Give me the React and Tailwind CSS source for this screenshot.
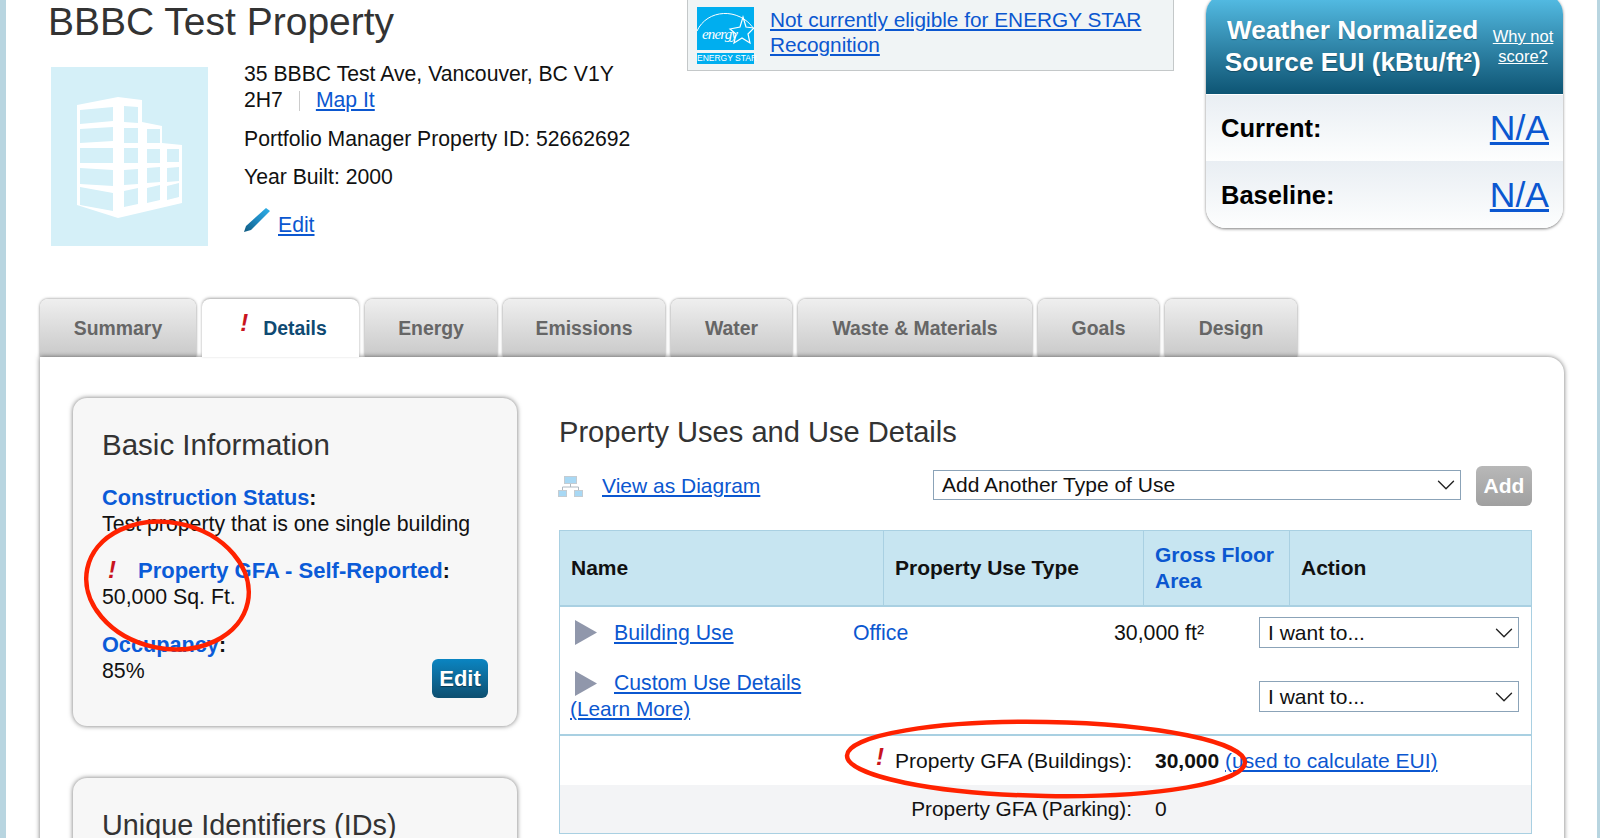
import React from 'react';
import { ChevronDown } from 'lucide-react';

const tabs = [
  { name: 'Summary', width: 'w-[156px]' },
  { name: 'Details', width: 'w-[157px]', active: true },
  { name: 'Energy', width: 'w-[132px]' },
  { name: 'Emissions', width: 'w-[162px]' },
  { name: 'Water', width: 'w-[121px]' },
  { name: 'Waste & Materials', width: 'w-[234px]' },
  { name: 'Goals', width: 'w-[121px]' },
  { name: 'Design', width: 'w-[132px]' },
];

const windows = [
  { x1: 29, x2: 62, rows: [[43, 57, 3], [62, 76, 2], [81, 96, 0], [101, 117, -2], [120, 138, -6]] },
  { x1: 73, x2: 87, rows: [[39, 55, -1], [61, 76, 0], [81, 96, 0], [103, 118, 1], [124, 140, 3]] },
  { x1: 96, x2: 109, rows: [[62, 76, 0], [82, 96, 0], [101, 116, 1], [121, 136, 3]] },
  { x1: 116, x2: 128, rows: [[82, 95, 0], [101, 115, 1], [119, 133, 3]] },
];

function BuildingImage() {
  return (
    <svg viewBox="0 0 157 179" className="w-[157px] h-[179px] shrink-0 bg-[#d5f0f8]">
      <polygon fill="#fff" points="26,38 67,30 91,33 91,55 111,59 111,76 131,78 131,136 67,151 26,138" />
      {windows.map(col => col.rows.map(([y1, y2, d]) => (
        <polygon
          key={col.x1 + '-' + y1}
          fill="#d5f0f8"
          points={`${col.x1},${y1} ${col.x2},${y1 - d} ${col.x2},${y2 - d} ${col.x1},${y2}`}
        />
      )))}
    </svg>
  );
}

function EnergyStarLogo() {
  return (
    <div className="w-[57px] h-[57px] shrink-0 flex flex-col gap-[3px]">
      <svg viewBox="0 0 57 43" className="w-[57px] h-[43px] bg-[#00aeef] shrink-0">
        <path d="M0 24 C10 2 42 0 57 22" fill="none" stroke="#fff" strokeWidth="1" />
        <polygon fill="none" stroke="#fff" strokeWidth="1.2" points="46,10 49,20 57,21 51,27 53,36 45,31 37,36 39,27 33,22 43,20" />
        <text x="5" y="32" fill="#fff" fontSize="15" fontStyle="italic" fontFamily="Liberation Serif, serif" textLength="36">energy</text>
      </svg>
      <div className="h-[11px] bg-[#00aeef] text-white text-[8.5px] leading-[11px] text-center whitespace-nowrap">ENERGY STAR</div>
    </div>
  );
}

function Triangle() {
  return (
    <svg viewBox="0 0 22 25" className="w-[22px] h-[25px] shrink-0">
      <polygon points="0,0 22,12.5 0,25" fill="#9097ab" />
    </svg>
  );
}

function Bang({ className }) {
  return <span className={'font-bold italic text-[#c9141e] ' + className}>!</span>;
}

function Select({ label, className }) {
  return (
    <div className={'relative ' + className}>
      <select className="w-full h-full appearance-none bg-white border border-[#8ba3b8] pl-2 text-[21px] text-[#111] rounded-none">
        <option>{label}</option>
      </select>
      <ChevronDown className="absolute right-0 top-1/2 -translate-y-1/2 w-[30px] h-[30px] text-[#222] pointer-events-none" strokeWidth={1.1} />
    </div>
  );
}

function Card({ title, titleSize, children, className }) {
  return (
    <div className={'bg-[#f7f7f7] rounded-[14px] shadow-[0_0_5px_rgba(0,0,0,0.55)] pl-[29px] pr-[29px] pt-[29px] ' + className}>
      <h3 className={titleSize + ' leading-[36px] text-[#333]'}>{title}</h3>
      {children}
    </div>
  );
}

export default function App() {
  return (
    <div className="relative h-[838px] overflow-hidden bg-[#b8d5e0] pl-[6px] pr-[3px] font-['Liberation_Sans',Arial,sans-serif] text-[21px] leading-[26px] text-[#111]">
      <div className="bg-white h-full">

        {/* top of page */}
        <div className="flex h-[299px]">
          <div className="w-[678px] pl-[42px] shrink-0">
            <h1 className="text-[39px] leading-[44px] text-[#333]">BBBC Test Property</h1>
            <div className="flex gap-[36px] mt-[23px] ml-[3px]">
              <BuildingImage />
              <div className="w-[392px] -mt-[6px] text-[21.2px]">
                <p>
                  35 BBBC Test Ave, Vancouver, BC V1Y 2H7
                  <span className="inline-block w-px h-[20px] bg-[#ccc] align-middle mx-[16px]"></span>
                  <a href="#" className="text-[#0b57d0] underline">Map It</a>
                </p>
                <p className="mt-[13px]">Portfolio Manager Property ID: 52662692</p>
                <p className="mt-[12px]">Year Built: 2000</p>
                <div className="flex items-end mt-[17px]">
                  <svg viewBox="0 0 26 25" className="w-[26px] h-[25px]">
                    <defs>
                      <linearGradient id="pen" x1="0" y1="1" x2="1" y2="0">
                        <stop offset="0" stopColor="#0f5a80" />
                        <stop offset="0.5" stopColor="#1e88c0" />
                        <stop offset="1" stopColor="#2fb0e8" />
                      </linearGradient>
                    </defs>
                    <polygon points="0,25 2,19 22,1 26,4 7,23" fill="url(#pen)" />
                  </svg>
                  <a href="#" className="ml-[8px] -mb-[6px] text-[#0b57d0] underline">Edit</a>
                </div>
              </div>
            </div>
          </div>

          <div className="w-[487px] h-[72px] -mt-[1px] ml-[3px] shrink-0 flex gap-[16px] pl-[9px] pt-[7px] bg-[#f0f4f5] border border-[#c4c8c9]">
            <EnergyStarLogo />
            <a href="#" className="text-[20.8px] leading-[25px] text-[#0b57d0] underline">Not currently eligible for ENERGY STAR Recognition</a>
          </div>

          <div className="w-[357px] h-[234px] -mt-[6px] ml-[32px] shrink-0 rounded-[20px] overflow-hidden shadow-[0_1px_3px_rgba(0,0,0,0.5)]">
            <div className="h-[100px] pt-[20px] pl-[9px] flex justify-center gap-[12px] bg-gradient-to-b from-[#56c0e8] to-[#0d5574] text-white">
              <div className="text-[26.2px] leading-[32px] font-bold text-center [text-shadow:0_1px_1px_rgba(0,0,0,0.3)]">Weather Normalized<br />Source EUI (kBtu/ft²)</div>
              <a href="#" className="text-[16.5px] leading-[20px] underline text-center pt-[12px]">Why not<br />score?</a>
            </div>
            <div className="h-[66px] mt-px flex items-center justify-between pl-[15px] pr-[14px] bg-gradient-to-b from-[#e9eef3] to-[#fdfefe]">
              <span className="text-[25.5px] font-bold text-black">Current:</span>
              <a href="#" className="text-[35.5px] text-[#0b57d0] underline">N/A</a>
            </div>
            <div className="h-[67px] flex items-center justify-between pl-[15px] pr-[14px] bg-gradient-to-b from-[#e9eef3] to-[#fdfefe]">
              <span className="text-[25.5px] font-bold text-black">Baseline:</span>
              <a href="#" className="text-[35.5px] text-[#0b57d0] underline">N/A</a>
            </div>
          </div>
        </div>

        {/* tabs */}
        <div className="flex gap-[6px] pl-[34px] h-[58px]">
          {tabs.map(tab => (
            <div
              key={tab.name}
              className={
                tab.width + ' flex items-center justify-center rounded-t-[8px] text-[19.4px] font-bold ' +
                (tab.active
                  ? 'relative z-10 pl-[6px] bg-white text-[#0f4a73] shadow-[0_-1px_3px_rgba(0,0,0,0.35)]'
                  : 'bg-gradient-to-b from-[#efefef] to-[#c9c9c9] text-[#666] shadow-[0_0_3px_rgba(0,0,0,0.5)]')
              }
            >
              {tab.active && <Bang className="text-[24px] mr-[15px] -mt-[10px]" />}
              {tab.name}
            </div>
          ))}
        </div>

        {/* main panel */}
        <div className="ml-[34px] mr-[33px] h-[600px] bg-white rounded-tr-[16px] shadow-[0_0_5px_rgba(0,0,0,0.55)] pl-[33px] pt-[41px] flex gap-[42px] relative">
          <div className="w-[444px] shrink-0">
            <Card title="Basic Information" titleSize="text-[29.5px]" className="pb-[28px] text-[21.3px]">
              <p className="mt-[22px]"><a href="#" className="font-bold text-[21.7px] text-[#0b5bd8]">Construction Status</a><b>:</b><br />Test property that is one single building</p>
              <p className="mt-[20px]">
                <Bang className="inline-block w-[36px] pl-[6px] text-[24px]" />
                <a href="#" className="font-bold text-[22px] text-[#0b5bd8]">Property GFA - Self-Reported</a><b>:</b><br />50,000 Sq. Ft.
              </p>
              <div className="flex justify-between mt-[22px]">
                <p><a href="#" className="font-bold text-[21.7px] text-[#0b5bd8]">Occupancy</a><b>:</b><br />85%</p>
                <button className="w-[56px] h-[39px] mt-[27px] rounded-[6px] bg-gradient-to-b from-[#0a85c2] to-[#0d4f70] text-white font-bold text-[22px] [text-shadow:0_1px_1px_rgba(0,0,0,0.4)]">Edit</button>
              </div>
            </Card>
            <Card title="Unique Identifiers (IDs)" titleSize="text-[28.8px]" className="mt-[52px] h-[200px]" />
          </div>

          <div className="w-[973px] shrink-0">
            <h2 className="text-[29.1px] leading-[36px] text-[#333] mt-[16px]">Property Uses and Use Details</h2>
            <div className="flex items-center h-[40px] mt-[16px]">
              <svg viewBox="0 0 25 21" className="w-[25px] h-[21px] shrink-0 -ml-px">
                <path d="M12.5 8 V11 M4.5 14 V11 H20.5 V14" fill="none" stroke="#aeb8c0" strokeWidth="1" />
                <rect x="6.5" y="0.5" width="12" height="7" fill="#a8d8f4" stroke="#c4ccd2" />
                <rect x="0.5" y="14.5" width="8" height="6" fill="#a8d8f4" stroke="#c4ccd2" />
                <rect x="16.5" y="14.5" width="8" height="6" fill="#a8d8f4" stroke="#c4ccd2" />
              </svg>
              <a href="#" className="ml-[19px] text-[#0b57d0] underline">View as Diagram</a>
              <Select label="Add Another Type of Use" className="w-[528px] h-[30px] -mt-[2px] ml-auto" />
              <button className="w-[56px] h-[40px] ml-[15px] rounded-[6px] bg-gradient-to-b from-[#b8b8b8] to-[#a0a0a0] text-white font-bold text-[21px]">Add</button>
            </div>

            <div className="mt-[24px] border border-[#a9d0e2]">
              <div className="grid grid-cols-[323px_260px_146px_1fr] h-[76px] bg-[#c7e5f1] border-b-2 border-[#a9d0e2] font-bold items-stretch">
                <div className="flex items-center px-[11px]">Name</div>
                <div className="flex items-center px-[11px] border-l border-[#a9d0e2]">Property Use Type</div>
                <div className="flex items-center px-[11px] border-l border-[#a9d0e2] text-[#0b57d0]">Gross Floor Area</div>
                <div className="flex items-center px-[11px] border-l border-[#a9d0e2]">Action</div>
              </div>

              <div className="flex items-center pt-[10px] pr-[12px]">
                <div className="w-[293px] pl-[15px] flex items-center gap-[17px] text-[21.3px]">
                  <Triangle />
                  <a href="#" className="text-[#0b57d0] underline">Building Use</a>
                </div>
                <a href="#" className="w-[200px] text-[21.3px] text-[#0b57d0]">Office</a>
                <div className="w-[151px] text-[21.3px] text-right">30,000 ft²</div>
                <Select label="I want to..." className="w-[260px] h-[31px] ml-auto" />
              </div>

              <div className="flex items-start mt-[22px] pb-[12px] pr-[12px]">
                <div className="pl-[10px] text-[21.2px]">
                  <div className="flex items-center pl-[5px] gap-[17px]">
                    <Triangle />
                    <a href="#" className="text-[#0b57d0] underline">Custom Use Details</a>
                  </div>
                  <a href="#" className="text-[20.8px] text-[#0b57d0] underline">(Learn More)</a>
                </div>
                <Select label="I want to..." className="w-[260px] h-[31px] mt-[11px] ml-auto" />
              </div>

              <div className="grid grid-cols-[572px_1fr] gap-x-[23px] items-center h-[51px] border-t-2 border-[#a9d0e2]">
                <div className="text-right">
                  <Bang className="text-[24px] mr-[11px] relative -top-[3px]" />
                  Property GFA (Buildings):
                </div>
                <div>
                  <b>30,000</b> <a href="#" className="text-[#0b57d0] underline">(used to calculate EUI)</a>
                </div>
              </div>
              <div className="grid grid-cols-[572px_1fr] gap-x-[23px] items-center h-[48px] bg-[#f3f4f6]">
                <div className="text-right text-[20.8px]">Property GFA (Parking):</div>
                <div>0</div>
              </div>
            </div>
          </div>
        </div>
      </div>

      {/* red hand-drawn annotations */}
      <svg viewBox="0 0 175 137" className="absolute left-[80px] top-[517px] w-[175px] h-[137px] pointer-events-none">
        <ellipse cx="87.5" cy="68.5" rx="82" ry="63" fill="none" stroke="#ff2200" strokeWidth="4.5" transform="rotate(12 87.5 68.5)" />
      </svg>
      <svg viewBox="0 0 412 86" className="absolute left-[840px] top-[716px] w-[412px] h-[86px] pointer-events-none">
        <ellipse cx="206" cy="43" rx="199" ry="37" fill="none" stroke="#ff2200" strokeWidth="4.5" transform="rotate(1 206 43)" />
      </svg>
    </div>
  );
}
